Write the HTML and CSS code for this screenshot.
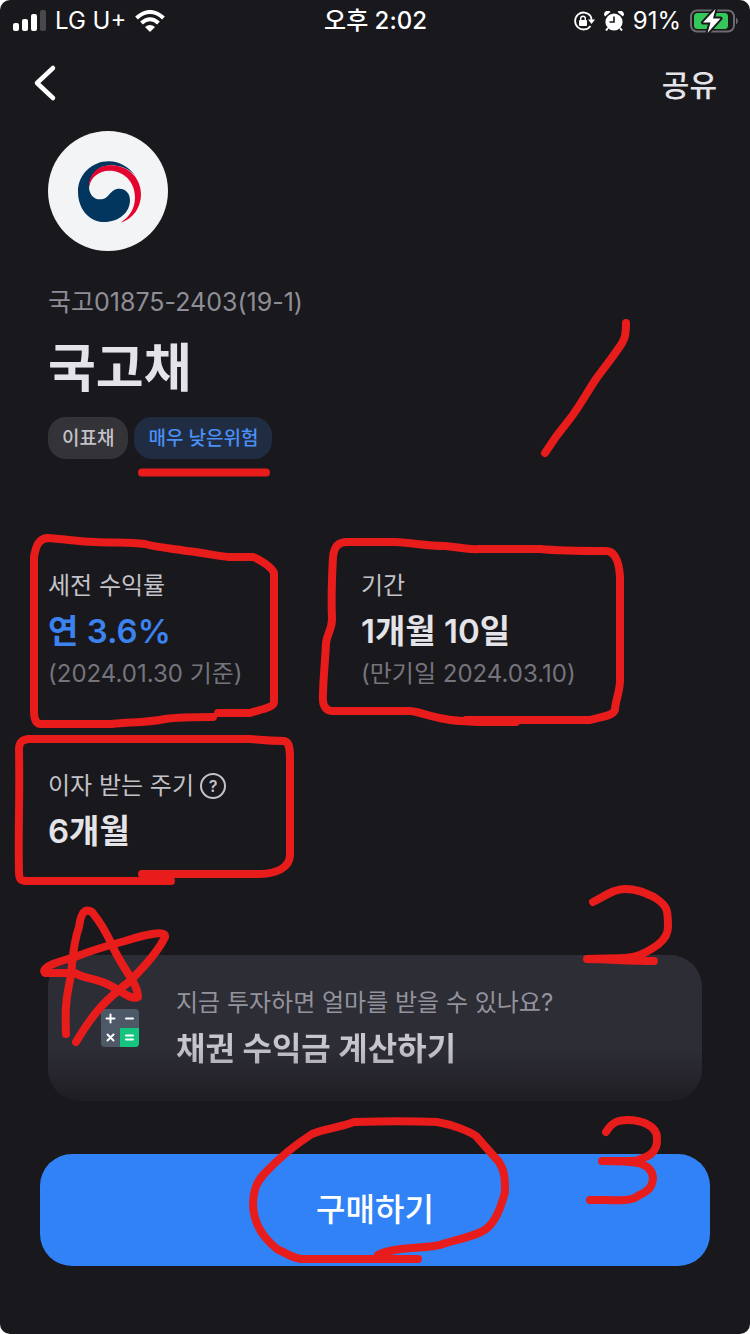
FILE: index.html
```html
<!DOCTYPE html>
<html lang="ko">
<head>
<meta charset="utf-8">
<meta name="viewport" content="width=device-width, initial-scale=1">
<title>국고채</title>
<link rel="stylesheet" href="styles.css">
</head>
<body>
<div class="screen">
  <div class="status">
    <div class="status-side">
      <svg class="signal" viewBox="0 0 34 22" aria-hidden="true">
        <rect x="1" y="13" width="6" height="8" rx="2" fill="#fff"/>
        <rect x="10" y="9" width="6" height="12" rx="2" fill="#fff"/>
        <rect x="19" y="4" width="6" height="17" rx="2" fill="#fff"/>
        <rect x="28" y="0" width="6" height="21" rx="2" fill="#49484d"/>
      </svg>
      <span>LG U+</span>
      <svg class="wifi" viewBox="0 0 30 22" aria-hidden="true">
        <path d="M15 22 L10 17 Q15 13 20 17 Z" fill="#fff"/>
        <path d="M6.500 13 Q15 5.500 23.500 13" fill="none" stroke="#fff" stroke-width="4"/>
        <path d="M1.500 8 Q15 -4 28.500 8" fill="none" stroke="#fff" stroke-width="4"/>
      </svg>
    </div>
    <time class="clock">오후 2:02</time>
    <div class="status-side status-end">
      <svg class="lock" viewBox="0 0 22 20" aria-hidden="true">
        <path d="M17.500 5 A8.500 8.500 0 1 0 17.500 15" fill="none" stroke="#fff" stroke-width="1.800"/>
        <path d="M15 8.500 H22 L18.500 13 Z" fill="#fff"/>
        <path d="M17.500 5 Q18.500 7 18.500 9" fill="none" stroke="#fff" stroke-width="1.800"/>
        <rect x="6" y="9" width="8" height="6" rx="1" fill="#fff"/>
        <path d="M7.700 10 V7.500 A2.300 2.300 0 0 1 12.300 7.500 V10" fill="none" stroke="#fff" stroke-width="1.400"/>
      </svg>
      <svg class="alarm" viewBox="0 0 20 20" aria-hidden="true">
        <circle cx="10" cy="11" r="8.600" fill="#fff"/>
        <path d="M1 5.500 A3.500 3.500 0 0 1 6.500 1 Z M19 5.500 A3.500 3.500 0 0 0 13.500 1 Z" fill="#fff"/>
        <path d="M4 17 L2 19.500 M16 17 L18 19.500" stroke="#fff" stroke-width="2"/>
        <path d="M10 5.500 V11 H5.500" fill="none" stroke="#19181d" stroke-width="1.600"/>
      </svg>
      <span>91%</span>
      <svg class="battery" viewBox="0 0 49 24" aria-hidden="true">
        <rect x="1" y="1.500" width="43" height="21" rx="6" fill="none" stroke="#6c6b70" stroke-width="2"/>
        <path d="M46 8.500 Q50 12 46 15.500 Z" fill="#6c6b70"/>
        <rect x="4" y="4" width="34" height="16" rx="3.500" fill="#34c759"/>
        <path d="M25.500 0 L13 13.500 H20.500 L17.500 24 L30.500 9.500 H23 Z" fill="#fff" stroke="#19181d" stroke-width="4" stroke-linejoin="round" paint-order="stroke"/>
      </svg>
    </div>
  </div>

  <header class="topbar">
    <button class="back" type="button" aria-label="뒤로">
      <svg viewBox="0 0 24 38" aria-hidden="true"><path d="M20 4 L4 19 L20 34" fill="none" stroke="#fff" stroke-width="4.500" stroke-linecap="round" stroke-linejoin="round"/></svg>
    </button>
    <button class="share" type="button">공유</button>
  </header>

  <main class="content">
    <svg class="emblem" viewBox="0 0 360 360" aria-hidden="true">
      <circle cx="180" cy="180" r="180" fill="#f2f4f6"/>
      <path d="M263 135 C242 108 214 91 183 91 C130 91 90 132 90 182 C90 234 124 273 168 273 C214 273 246 244 246 207 C246 187 232 173 214 173 C184 173 186 205 156 205 C136 205 123 188 123 167 C126 130 150 103 188 103 C218 103 244 115 263 135 Z" fill="#03365f"/>
      <path d="M123 170 C121 132 148 103 187 103 C240 103 279 140 279 190 C279 232 253 265 218 275 C247 256 261 230 261 199 C261 151 226 119 184 119 C152 119 127 139 123 170 Z" fill="#e4032e"/>
    </svg>
    <p class="code">국고01875-2403(19-1)</p>
    <h1 class="title">국고채</h1>
    <div class="badges">
      <span class="badge">이표채</span>
      <span class="badge badge-blue">매우 낮은위험</span>
    </div>

    <dl class="facts">
      <div class="fact">
        <dt>세전 수익률</dt>
        <dd class="value value-blue">연 3.6%</dd>
        <dd class="note">(2024.01.30 기준)</dd>
      </div>
      <div class="fact">
        <dt>기간</dt>
        <dd class="value">1개월 10일</dd>
        <dd class="note">(만기일 2024.03.10)</dd>
      </div>
      <div class="fact">
        <dt>이자 받는 주기 <button class="help" type="button" aria-label="도움말">?</button></dt>
        <dd class="value">6개월</dd>
      </div>
    </dl>

    <button class="calc" type="button">
      <svg class="calc-icon" viewBox="0 0 38 38" aria-hidden="true">
        <rect width="38" height="38" rx="4" fill="#4e5968"/>
        <path d="M19 19 H38 V34 A4 4 0 0 1 34 38 H19 Z" fill="#15c47e"/>
        <path d="M5.500 9.500 H13.500 M9.500 5.500 V13.500 M25 9.500 H32 M6.500 25.500 L12.500 31.500 M12.500 25.500 L6.500 31.500 M25 26.500 H32 M25 30.500 H32" stroke="#fff" stroke-width="2" stroke-linecap="round"/>
      </svg>
      <span class="calc-text">
        <span class="calc-sub">지금 투자하면 얼마를 받을 수 있나요?</span>
        <span class="calc-title">채권 수익금 계산하기</span>
      </span>
    </button>
  </main>

  <footer class="footer">
    <button class="buy" type="button">구매하기</button>
  </footer>

  <svg class="marks" viewBox="0 0 750 1334" aria-hidden="true">
    <path d="M142 472.500 H266"/>
    <path d="M626 323 C626 335 625 340 618 349 C610 361 603 369 596 379 C586 394 578 409 569 420 C559 432 555 437 545 453"/>
    <path d="M213 717 C195 717 180 717 165 719 C145 723 130 722 112 724 H41 C35 724 34 718 34 711 V557 C36 545 39 539 47 538 C66 539 78 542 95 542 C115 543 130 542 145 544 C160 548 170 548 187 551 C205 553 217 556 229 557 H253 C259 559 272 567 274 573 V702 C274 708 258 710 250 713 H218"/>
    <path d="M516 722 C490 722 465 723 445 719 C428 716 420 712 410 711 H332 C325 711 322 704 323 695 C323 680 325 665 326 643 C327 634 332 630 332 619 C331 595 332 575 333 557 C334 546 339 542 347 542 H395 C415 543 425 546 445 546 C460 547 466 550 479 549 H540 C560 551 575 551 606 551 C615 551 619 562 620 577 V682 C619 695 615 702 615 710 C613 716 600 717 590 720 H466"/>
    <path d="M171 881 H28 C21 881 19 880 19 872 C18 830 20 800 19 750 C19 742 22 740 28 739 H250 C263 740 266 741 284 741 C290 742 290 750 290 760 V855 C290 868 275 874 260 874 H142"/>
    <path d="M66 1034 C65 1010 66 1000 69 985 C73 970 71 950 79 927 C81 912 85 908 92 912 C101 923 107 934 112 945 C123 970 138 983 138 997 C132 1001 120 990 107 984 C94 978 85 979 75 973 H45 C40 967 60 961 75 957 C95 949 110 945 125 941 C147 934 166 930 165 937 C158 952 145 966 130 981 C107 999 95 1010 76 1042"/>
    <path d="M593 902 C605 896 614 889 625 889 C637 889 645 893 654 897 C668 906 668 910 668 927 C668 942 650 950 640 955 C630 959 620 958 587 959 C605 959 630 961 654 961"/>
    <path d="M606 1132 C612 1122 618 1120 628 1120 C640 1120 657 1125 657 1138 C658 1154 647 1157 635 1161 H602 C635 1161 652 1162 653 1178 C652 1193 640 1193 635 1198 C626 1201 620 1200 590 1200"/>
    <path d="M418 1259 H301 C292 1258 284 1252 277 1249 C262 1237 253 1222 253 1203 C254 1188 257 1182 264 1174 C278 1159 290 1148 312 1134 C324 1129 338 1128 354 1122 C390 1121 410 1121 437 1122 C455 1125 470 1132 476 1136 L499 1162 C505 1171 505 1180 505 1192 C500 1212 493 1227 481 1232 C468 1238 455 1240 440 1245 C420 1249 392 1247 378 1255"/>
  </svg>
</div>
</body>
</html>
```
FILE: styles.css
```css
* { box-sizing: border-box; }

html { background: #fff; }

body {
  margin: 0;
  font-family: Inter, "Noto Sans CJK KR", sans-serif;
  color: #e4e4e8;
}

button {
  border: 0;
  padding: 0;
  background: none;
  color: inherit;
  font: inherit;
  cursor: pointer;
}

p, h1, dl, dd { margin: 0; }

.screen {
  position: relative;
  display: flex;
  flex-direction: column;
  min-height: 100vh;
  border-radius: 10px;
  background: #19181d;
}

.status {
  display: grid;
  grid-template-columns: 1fr auto 1fr;
  align-items: center;
  height: 40px;
  padding: 1px 11px 0 12px;
  color: #fff;
  font-size: 24px;
  line-height: 32px;
}

.status-side {
  display: flex;
  align-items: center;
  gap: 9px;
}

.status-end { justify-content: flex-end; }
.signal { width: 34px; height: 22px; }
.wifi { width: 30px; height: 22px; }
.clock { font-weight: 500; }
.lock { width: 22px; height: 20px; }
.alarm { width: 20px; height: 20px; }
.battery { width: 49px; height: 24px; }

.topbar {
  display: flex;
  align-items: center;
  justify-content: space-between;
  height: 86px;
  padding: 0 33px;
}

.back svg {
  display: block;
  width: 24px;
  height: 38px;
}

.share {
  padding-top: 3px;
  font-size: 30px;
  font-weight: 500;
  line-height: 40px;
}

.content {
  display: flex;
  flex-direction: column;
  padding: 5px 48px 0;
}

.emblem {
  width: 120px;
  height: 120px;
}

.code {
  margin-top: 33px;
  color: #8f8e96;
  font-size: 25px;
  line-height: 36px;
}

.title {
  margin-top: 17px;
  font-size: 52px;
  font-weight: 700;
  line-height: 64px;
}

.badges {
  display: flex;
  gap: 6px;
  margin-top: 16px;
}

.badge {
  padding: 2px 14px 0;
  border-radius: 18px;
  background: #343338;
  color: #c3c2c8;
  font-size: 19px;
  font-weight: 500;
  line-height: 40px;
}

.badge-blue {
  background: #202c42;
  color: #4a90f5;
}

.facts {
  display: grid;
  grid-template-columns: 1fr 1fr;
  row-gap: 74px;
  margin-top: 108px;
  padding-right: 28px;
}

.fact dt {
  display: flex;
  align-items: center;
  gap: 6px;
  color: #c3c2c8;
  font-size: 24px;
  line-height: 38px;
}

.help {
  width: 26px;
  height: 26px;
  border: 2px solid #c3c2c8;
  border-radius: 50%;
  font-size: 16px;
  font-weight: 600;
  line-height: 22px;
}

.value {
  margin-top: 2px;
  font-size: 33px;
  font-weight: 600;
  line-height: 48px;
}

.value-blue { color: #3c83f0; }

.note {
  color: #75747c;
  font-size: 24px;
  line-height: 38px;
}

.calc {
  display: flex;
  align-items: center;
  gap: 37px;
  margin-top: 100px;
  padding: 28px 53px;
  border-radius: 32px;
  background: linear-gradient(#2d2d36 65%, #1e1d23);
  text-align: left;
}

.calc-icon {
  width: 38px;
  height: 38px;
}

.calc-text {
  display: flex;
  flex-direction: column;
  gap: 2px;
}

.calc-sub {
  color: #94939c;
  font-size: 24px;
  line-height: 40px;
}

.calc-title {
  background: linear-gradient(#c7c6cc 40%, #a9a8ae);
  background-clip: text;
  color: transparent;
  font-size: 32px;
  font-weight: 700;
  line-height: 48px;
}

.footer {
  display: flex;
  padding: 53px 40px 68px;
}

.buy {
  flex: 1;
  padding: 32px 0;
  border-radius: 32px;
  background: #3182f6;
  color: #fff;
  font-size: 32px;
  font-weight: 500;
  line-height: 48px;
}

.marks {
  position: absolute;
  inset: 0;
  width: 100%;
  pointer-events: none;
  fill: none;
  stroke: #e71c1b;
  stroke-width: 8;
  stroke-linecap: round;
  stroke-linejoin: round;
}
```
